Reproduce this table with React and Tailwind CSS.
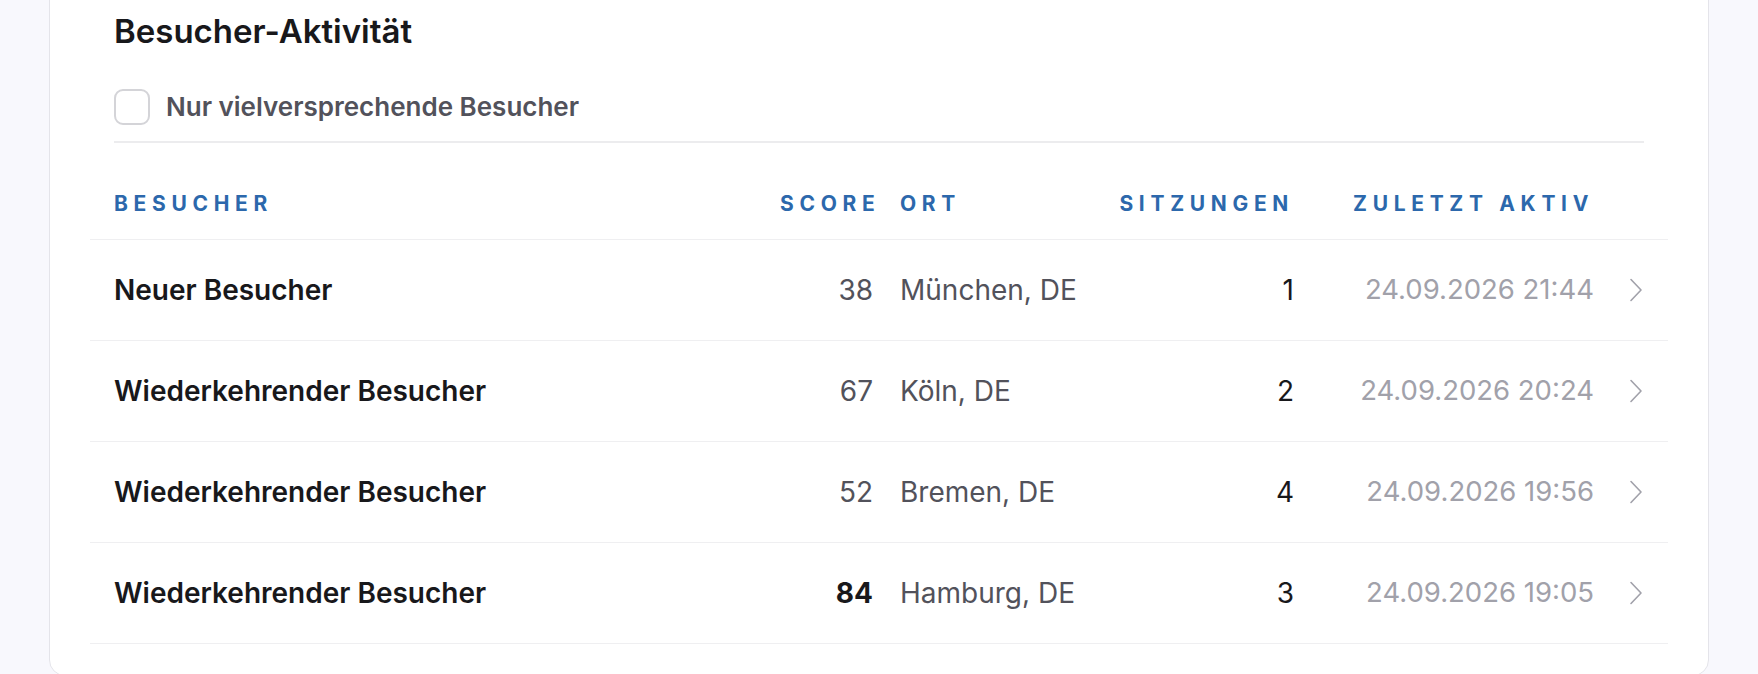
import React from "react";

const rows = [
  { name: "Neuer Besucher", score: "38", hot: false, ort: "München, DE", sessions: "1", last: "24.09.2026 21:44" },
  { name: "Wiederkehrender Besucher", score: "67", hot: false, ort: "Köln, DE", sessions: "2", last: "24.09.2026 20:24" },
  { name: "Wiederkehrender Besucher", score: "52", hot: false, ort: "Bremen, DE", sessions: "4", last: "24.09.2026 19:56" },
  { name: "Wiederkehrender Besucher", score: "84", hot: true, ort: "Hamburg, DE", sessions: "3", last: "24.09.2026 19:05" },
];

function Chevron() {
  return (
    <svg width="14" height="24" viewBox="0 0 14 24" fill="none" className="text-[#a1a1aa]">
      <path d="M2 1.5 L12 12 L2 22.5" stroke="currentColor" strokeWidth="1.6" strokeLinecap="round" strokeLinejoin="round" />
    </svg>
  );
}

const grid = "grid grid-cols-[1fr_99px_215px_200px_300px_50px] items-center px-6";

export default function App() {
  return (
    <div className="h-[674px] w-full overflow-hidden bg-[#f8f8fd] font-['Inter','Liberation_Sans',sans-serif]">
      <div className="ml-[49px] mr-[49px] mt-[-20px] rounded-2xl border border-[#e4e4ea] bg-white px-10 pt-[32px] pb-[31px]">
        <div className="px-6">
          <h2 className="text-[33px] leading-[36px] font-semibold text-[#18181b]">Besucher-Aktivität</h2>
          <label className="mt-10 flex h-[36px] items-center gap-[16px]">
            <span className="h-[36px] w-[36px] rounded-[9px] border-2 border-[#d4d4d8] bg-white" />
            <span className="text-[26px] leading-[36px] font-semibold text-[#52525b]">Nur vielversprechende Besucher</span>
          </label>
          <div className="mt-4 border-b-2 border-[#ececee]" />
        </div>
        <div className="mt-[25px]">
          <div className={`${grid} h-[72px] border-b border-[#efeff1] text-[21px] font-bold uppercase tracking-[0.27em] text-[#2c68ac]`}>
            <div>Besucher</div>
            <div className="text-right">Score</div>
            <div className="pl-[21px]">Ort</div>
            <div className="text-right">Sitzungen</div>
            <div className="text-right">Zuletzt aktiv</div>
            <div />
          </div>
          {rows.map((r, i) => (
            <div key={i} className={`${grid} h-[101px] border-b border-[#efeff1] text-[28px]`}>
              <div className="font-semibold text-[#18181b]">{r.name}</div>
              <div className={r.hot ? "pr-[6px] text-right font-bold text-[#18181b]" : "pr-[6px] text-right text-[#52525b]"}>{r.score}</div>
              <div className="pl-[21px] text-[#52525b]">{r.ort}</div>
              <div className="text-right text-[#18181b]">{r.sessions}</div>
              <div className="text-right text-[27.5px] text-[#a1a1aa]">{r.last}</div>
              <div className="flex justify-end pr-[1px]"><Chevron /></div>
            </div>
          ))}
        </div>
      </div>
    </div>
  );
}
